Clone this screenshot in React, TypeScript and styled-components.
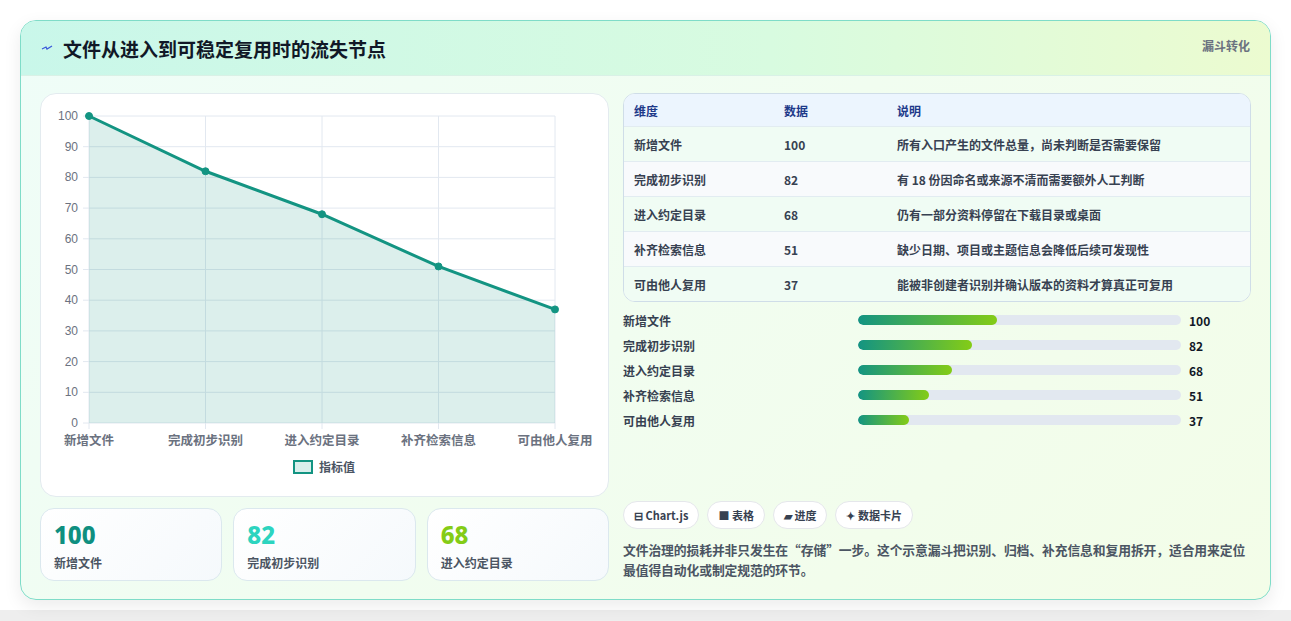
import React from "react";
import styled, { createGlobalStyle } from "styled-components";

const Global = createGlobalStyle`
  html, body { margin: 0; background: #fff; }
  body { font-family: "Noto Sans CJK SC", "Noto Sans", sans-serif; color: #1f2937; }
  * { box-sizing: border-box; }
`;
const Page = styled.div`
  padding: 20px 20px 0 20px; height: 621px;
  background: linear-gradient(to bottom, #fff 0, #fff 610px, #eeeeee 610px);
`;
const Card = styled.div`
  width: 1251px; height: 580px; border: 1px solid #7fdcc8; border-radius: 16px; overflow: hidden;
  background: linear-gradient(135deg, #effdf8 0%, #f3fde8 100%);
  box-shadow: 0 6px 18px rgba(0,0,0,0.08);
`;
const Header = styled.div`
  height: 55px; display: flex; align-items: center; justify-content: space-between; padding: 0 20px 0 20px;
  background: linear-gradient(90deg, #c9f7ea 0%, #d8fbe0 60%, #ecfbd0 100%);
  border-bottom: 1px solid #d9f1e6;
`;
const Title = styled.h1`
  margin: 0; font-size: 19px; font-weight: 700; color: #111827; display: flex; align-items: center; gap: 10px;
`;
const Tag = styled.span`font-size: 12px; font-weight: 700; color: #6b7280; align-self: flex-start; margin-top: 16px;`;
const Body = styled.div`display: grid; grid-template-columns: 569px 628px; gap: 14px; padding: 17px 19px 0 19px;`;
const Col = styled.div`display: flex; flex-direction: column;`;
const ChartCard = styled.div`
  height: 404px; background: #fff; border: 1px solid #e3ebef; border-radius: 16px; position: relative;
`;
const Stats = styled.div`display: grid; grid-template-columns: repeat(3, 1fr); gap: 11px; margin-top: 11px;`;
const Stat = styled.div`
  height: 73px; border: 1px solid #dbe8ee; border-radius: 14px; padding: 11px 13px;
  background: linear-gradient(135deg, #ffffff, #f5f9fc);
`;
const StatNum = styled.div<{ $c: string }>`font-size: 24px; font-weight: 800; color: ${p => p.$c}; line-height: 30px; font-family: "Noto Sans", sans-serif;`;
const StatLabel = styled.div`font-size: 12px; font-weight: 600; color: #4b5563; margin-top: 4px;`;
const Table = styled.div`border: 1px solid #cfdde8; border-radius: 12px; overflow: hidden; background: #fff;`;
const Row = styled.div<{ $h?: boolean; $alt?: boolean }>`
  display: grid; grid-template-columns: 150px 113px 1fr; align-items: center; padding-left: 10px;
  height: ${p => (p.$h ? 32 : 35)}px; font-size: 12px; font-weight: 700;
  color: ${p => (p.$h ? "#1e3a8a" : "#374151")};
  background: ${p => (p.$h ? "#ecf5fe" : p.$alt ? "#f8fafc" : "#f0fcf4")};
  border-top: ${p => (p.$h ? "none" : "1px solid #e2ecf1")};
`;
const Bars = styled.div`display: flex; flex-direction: column; gap: 7px; margin-top: 9px;`;
const BarRow = styled.div`display: grid; grid-template-columns: 235px 323px 1fr; align-items: center; height: 18px; font-size: 12px; font-weight: 700; color: #374151;`;
const Track = styled.div`height: 10px; border-radius: 5px; background: #e2e8f0; overflow: hidden;`;
const Fill = styled.div`height: 100%; border-radius: 5px; background: linear-gradient(90deg, #139482, #84cc16);`;
const Val = styled.span`padding-left: 8px; font-size: 12px; color: #111827;`;
const Chips = styled.div`display: flex; gap: 8px; margin-top: 72px;`;
const Chip = styled.span`
  height: 28px; padding: 0 10px; border-radius: 14px; background: #fff; border: 1px solid #e5e7eb;
  display: flex; align-items: center; gap: 4px; font-size: 11px; font-weight: 700; color: #374151;
`;
const Para = styled.p`margin: 11px 0 0; font-size: 12.8px; font-weight: 600; color: #4b5563; line-height: 20px; letter-spacing: -0.1px;`;

const data = [
  ["新增文件", 100, "所有入口产生的文件总量，尚未判断是否需要保留"],
  ["完成初步识别", 82, "有 18 份因命名或来源不清而需要额外人工判断"],
  ["进入约定目录", 68, "仍有一部分资料停留在下载目录或桌面"],
  ["补齐检索信息", 51, "缺少日期、项目或主题信息会降低后续可发现性"],
  ["可由他人复用", 37, "能被非创建者识别并确认版本的资料才算真正可复用"],
] as const;

function Chart() {
  const x0 = 48, x1 = 514, y0 = 22, y1 = 329;
  const xs = data.map((_, i) => x0 + (i * (x1 - x0)) / 4);
  const ys = data.map(d => y1 - ((d[1] as number) / 100) * (y1 - y0));
  const pts = xs.map((x, i) => `${x},${ys[i]}`).join(" ");
  return (
    <svg width="567" height="402" style={{ display: "block" }}>
      {Array.from({ length: 11 }, (_, i) => {
        const y = y1 - (i * (y1 - y0)) / 10;
        return (
          <g key={i}>
            <line x1={x0 - 6} x2={x1} y1={y} y2={y} stroke="#e2e8f0" />
            <text x={37} y={y + 4} textAnchor="end" fontSize="12" fill="#6b7280" fontFamily="Liberation Sans, sans-serif">{i * 10}</text>
          </g>
        );
      })}
      {xs.map((x, i) => (
        <g key={i}>
          <line x1={x} x2={x} y1={y0} y2={y1 + 6} stroke="#e2e8f0" />
          <text x={x} y={351} textAnchor="middle" fontSize="12.5" fontWeight="600" fill="#6b7280">{data[i][0]}</text>
        </g>
      ))}
      <polygon points={`${x0},${y1} ${pts} ${x1},${y1}`} fill="rgba(19,148,130,0.15)" />
      <polyline points={pts} fill="none" stroke="#139482" strokeWidth="3" />
      {xs.map((x, i) => <circle key={i} cx={x} cy={ys[i]} r="3.5" fill="#139482" stroke="#139482" />)}
      <rect x={253} y={367} width={18} height={12} fill="#d9efec" stroke="#139482" strokeWidth="2" />
      <text x={278} y={378} fontSize="12" fontWeight="600" fill="#4b5563">指标值</text>
    </svg>
  );
}

export default function App() {
  return (
    <>
      <Global />
      <Page>
        <Card>
          <Header>
            <Title>
              <svg width="12" height="8" viewBox="0 0 12 8"><path d="M1 5 L5 3 L6 5 L11 2" stroke="#3b5bdb" strokeWidth="1.3" fill="none" /></svg>
              文件从进入到可稳定复用时的流失节点
            </Title>
            <Tag>漏斗转化</Tag>
          </Header>
          <Body>
            <Col>
              <ChartCard><Chart /></ChartCard>
              <Stats>
                <Stat><StatNum $c="#0f8f80">100</StatNum><StatLabel>新增文件</StatLabel></Stat>
                <Stat><StatNum $c="#2dd4bf">82</StatNum><StatLabel>完成初步识别</StatLabel></Stat>
                <Stat><StatNum $c="#84cc16">68</StatNum><StatLabel>进入约定目录</StatLabel></Stat>
              </Stats>
            </Col>
            <Col>
              <Table>
                <Row $h><span>维度</span><span>数据</span><span>说明</span></Row>
                {data.map((d, i) => (
                  <Row key={i} $alt={i % 2 === 1}><span>{d[0]}</span><span>{d[1]}</span><span>{d[2]}</span></Row>
                ))}
              </Table>
              <Bars>
                {data.map((d, i) => (
                  <BarRow key={i}>
                    <span>{d[0]}</span>
                    <Track><Fill style={{ width: `${(d[1] as number) * 0.43}%` }} /></Track>
                    <Val>{d[1]}</Val>
                  </BarRow>
                ))}
              </Bars>
              <Chips>
                <Chip>⊟ Chart.js</Chip>
                <Chip>■ 表格</Chip>
                <Chip>▰ 进度</Chip>
                <Chip>✦ 数据卡片</Chip>
              </Chips>
              <Para>文件治理的损耗并非只发生在“存储”一步。这个示意漏斗把识别、归档、补充信息和复用拆开，适合用来定位最值得自动化或制定规范的环节。</Para>
            </Col>
          </Body>
        </Card>
      </Page>
    </>
  );
}
